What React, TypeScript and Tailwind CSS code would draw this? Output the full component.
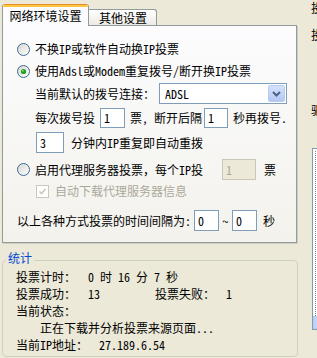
import React from "react";

const Radio = ({ checked = false }: { checked?: boolean }) => (
  <svg width="13" height="13" viewBox="0 0 13 13" className="shrink-0">
    <defs>
      <linearGradient id={checked ? "rgc" : "rgu"} x1="0" y1="0" x2="1" y2="1">
        <stop offset="0" stopColor="#D6D6CE" />
        <stop offset="1" stopColor="#FFFFFF" />
      </linearGradient>
    </defs>
    <circle cx="6.5" cy="6.5" r="6" fill={`url(#${checked ? "rgc" : "rgu"})`} stroke="#3D6A99" strokeWidth="1" />
    {checked && (
      <>
        <circle cx="6.5" cy="6.5" r="2.6" fill="#21A121" />
        <circle cx="5.8" cy="5.8" r="1" fill="#7BD37B" />
      </>
    )}
  </svg>
);

const Input = ({ v, w, h = 20, disabled = false }: { v: string; w: number; h?: number; disabled?: boolean }) => (
  <div
    className={`shrink-0 flex items-center pl-[3px] border ${disabled ? "border-[#C9C7BA] bg-[#ECE9D8] text-[#ACA899]" : "border-[#7F9DB9] bg-white text-black"}`}
    style={{ width: w, height: h }}
  >
    {v}
  </div>
);

export default function App() {
  return (
    <div className="w-[317px] h-[358px] bg-[#ECE9D8] flex overflow-hidden text-[12px] leading-[16px] text-black font-['Noto_Sans_Mono_CJK_SC','Noto_Sans_CJK_SC',sans-serif]">
      {/* left column */}
      <div className="w-[298px] shrink-0 flex flex-col pl-[2px]">
        {/* tabs */}
        <div className="h-[25px] flex items-end">
          <div className="relative z-10 w-[87px] h-[22px] mb-[-1px] flex flex-col bg-[#FCFCFE] border-l border-r border-[#919B9C] rounded-t-[3px] overflow-hidden">
            <div className="h-[1px] bg-[#E68B2C]" />
            <div className="h-[2px] bg-[#FFC73C]" />
            <div className="flex-1 flex items-center justify-center pb-[2px]">网络环境设置</div>
          </div>
          <div className="w-[69px] h-[16px] ml-[-1px] flex items-center justify-center border-t border-r border-[#919B9C] rounded-tr-[3px] bg-linear-to-b from-[#FFFFFF] to-[#ECEBE6]">
            <span className="pl-[2px]">其他设置</span>
          </div>
        </div>
        {/* panel */}
        <div className="w-[295px] h-[218px] border border-[#919B9C] bg-linear-to-b from-[#FCFCFE] to-[#F3F2EC] flex flex-col pt-[13px] shadow-[1px_1px_0_#D0CEC0]">
          <div className="h-[20px] flex items-center pl-[14px]">
            <Radio />
            <span className="pl-[5px]">不换IP或软件自动换IP投票</span>
          </div>
          <div className="h-[20px] mt-[2px] flex items-center pl-[14px]">
            <Radio checked />
            <span className="pl-[5px]">使用Adsl或Modem重复拨号/断开换IP投票</span>
          </div>
          <div className="h-[21px] mt-[2px] flex items-center pl-[32px]">
            <span className="w-[124px] shrink-0">当前默认的拨号连接：</span>
            <div className="w-[128px] h-[21px] border border-[#7F9DB9] bg-white flex items-center justify-between">
              <span className="pl-[5px]">ADSL</span>
              <div className="w-[17px] h-[17px] mr-[1px] rounded-[2px] border border-[#B9CAEF] bg-linear-to-b from-[#D6E2FC] to-[#B3C7F4] flex items-center justify-center">
                <svg width="9" height="6" viewBox="0 0 9 6">
                  <path d="M1 1 L4.5 4.5 L8 1" fill="none" stroke="#4D6185" strokeWidth="2" />
                </svg>
              </div>
            </div>
          </div>
          <div className="h-[20px] mt-[4px] flex items-center pl-[32px]">
            <span className="w-[65px] shrink-0">每次拨号投</span>
            <Input v="1" w={25} />
            <span className="w-[79px] shrink-0 pl-[5px] whitespace-pre">票, 断开后隔</span>
            <Input v="1" w={24} />
            <span className="pl-[5px]">秒再拨号.</span>
          </div>
          <div className="h-[21px] mt-[4px] flex items-center pl-[33px]">
            <Input v="3" w={28} h={21} />
            <span className="pl-[7px]">分钟内IP重复即自动重拨</span>
          </div>
          <div className="h-[21px] mt-[6px] flex items-center pl-[14px]">
            <Radio />
            <span className="w-[192px] shrink-0 pl-[5px]">启用代理服务器投票，每个IP投</span>
            <Input v="1" w={34} h={21} disabled />
            <span className="pl-[8px]">票</span>
          </div>
          <div className="h-[14px] mt-[4px] flex items-center pl-[33px]">
            <div className="w-[13px] h-[13px] border border-[#CAC8BB] bg-white flex items-center justify-center">
              <svg width="9" height="9" viewBox="0 0 9 9">
                <path d="M1.5 4.5 L3.5 6.5 L7.5 2" fill="none" stroke="#CAC8BB" strokeWidth="1.6" />
              </svg>
            </div>
            <span className="pl-[6px] text-[#ACA899]">自动下载代理服务器信息</span>
          </div>
          <div className="h-[21px] mt-[12px] flex items-center pl-[14px]">
            <span className="w-[177px] shrink-0">以上各种方式投票的时间间隔为:</span>
            <Input v="0" w={25} h={21} />
            <span className="w-[13px] text-center">~</span>
            <Input v="0" w={25} h={21} />
            <span className="pl-[6px]">秒</span>
          </div>
        </div>
        {/* stats group */}
        <div className="relative mt-[17px] w-[296px] h-[97px] border border-[#D0D0BF] rounded-[4px] flex flex-col pt-[7px] pl-[13px]">
          <span className="absolute left-[3px] top-[-11px] px-[2px] bg-[#ECE9D8] text-[#0046D5]">统计</span>
          <div className="h-[17px] flex items-center whitespace-pre">
            <span className="w-[72px] shrink-0">投票计时：</span>
            <span>0 时 16 分 7 秒</span>
          </div>
          <div className="h-[17px] flex items-center whitespace-pre">
            <span className="w-[72px] shrink-0">投票成功：</span>
            <span className="w-[67px] shrink-0">13</span>
            <span className="w-[71px] shrink-0">投票失败：</span>
            <span>1</span>
          </div>
          <div className="h-[17px] flex items-center">当前状态：</div>
          <div className="h-[17px] flex items-center pl-[24px]">正在下载并分析投票来源页面...</div>
          <div className="h-[17px] flex items-center">
            <span className="w-[83px] shrink-0">当前IP地址：</span>
            <span>27.189.6.54</span>
          </div>
        </div>
      </div>
      {/* right column */}
      <div className="flex-1 flex flex-col pl-[13px] whitespace-nowrap">
        <div className="h-[16px] mt-[0px]">投</div>
        <div className="h-[16px] mt-[11px]">投</div>
        <div className="h-[16px] mt-[59px]">驱</div>
        <div className="mt-[30px] ml-[1px] h-[182px] w-[20px] border border-[#7F9DB9] bg-white flex flex-col">
          <div className="flex-1 ml-[2px] mt-[2px] border-l border-dotted border-[#808080]" />
          <div className="h-[13px] w-[14px] bg-[#C4D3F5] border border-[#B9CAEF]" />
        </div>
      </div>
    </div>
  );
}
